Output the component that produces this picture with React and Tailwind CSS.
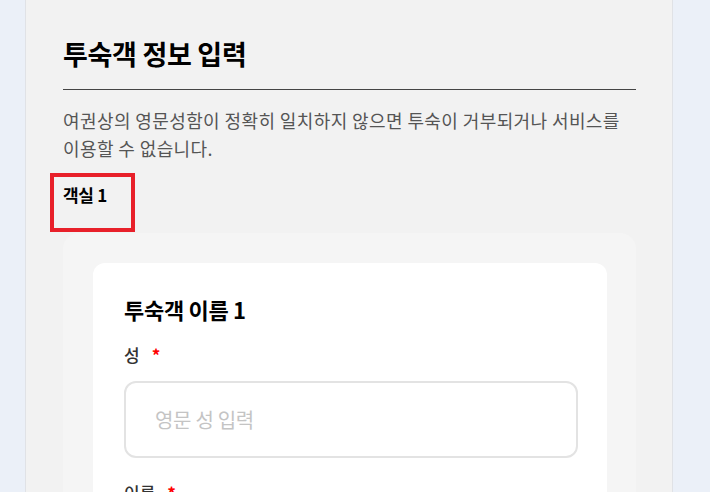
export default function App() {
  return (
    <div
      className="min-h-screen w-full bg-[#ebf0f8] overflow-hidden"
      style={{ fontFamily: '"Noto Sans CJK KR", "Noto Sans", sans-serif' }}
    >
      <div className="ml-[25px] w-[648px] h-[492px] overflow-hidden bg-[#f2f2f2] border-x border-[#e0e2e6] pl-[37px] pr-[36px] pt-[34px]">
        <h2 className="text-[27px] leading-[40px] font-bold text-black tracking-[-0.3px]">투숙객 정보 입력</h2>
        <div className="mt-[15px] border-b border-[#444]" />
        <p className="mt-[16px] text-[18px] leading-[28px] text-[#555] tracking-[0.4px]">
          여권상의 영문성함이 정확히 일치하지 않으면 투숙이 거부되거나 서비스를 이용할 수 없습니다.
        </p>
        <div className="mt-[11px] -ml-[13px] w-[85px] h-[59px] border-4 border-[#e8202a] pl-[9px] pt-[6px]">
          <span className="text-[17px] leading-[24px] font-bold text-black tracking-[-0.3px]">객실 1</span>
        </div>
        <div className="mt-px rounded-[16px] bg-[#f5f5f5] pl-[30px] pr-[29px] pt-[30px] pb-[30px]">
          <div className="rounded-[12px] bg-white pl-[31px] pr-[29px] pt-[30px] pb-[30px]">
            <h3 className="text-[22px] leading-[32px] font-bold text-black tracking-[-0.3px]">투숙객 이름 1</h3>
            <div className="mt-[18px] flex items-center gap-[12px] text-[17px] leading-[24px] font-medium text-[#333]">
              <span>성</span>
              <span className="text-[#ff0000] font-bold">*</span>
            </div>
            <div className="mt-[14px] h-[77px] rounded-[12px] border-2 border-[#e3e3e3] flex items-center pl-[29px]">
              <span className="text-[20px] text-[#c4c4c4] tracking-[-0.3px]">영문 성 입력</span>
            </div>
            <div className="mt-[23px] flex items-center gap-[12px] text-[17px] leading-[24px] font-medium text-[#333]">
              <span>이름</span>
              <span className="text-[#ff0000] font-bold">*</span>
            </div>
          </div>
        </div>
      </div>
    </div>
  );
}
